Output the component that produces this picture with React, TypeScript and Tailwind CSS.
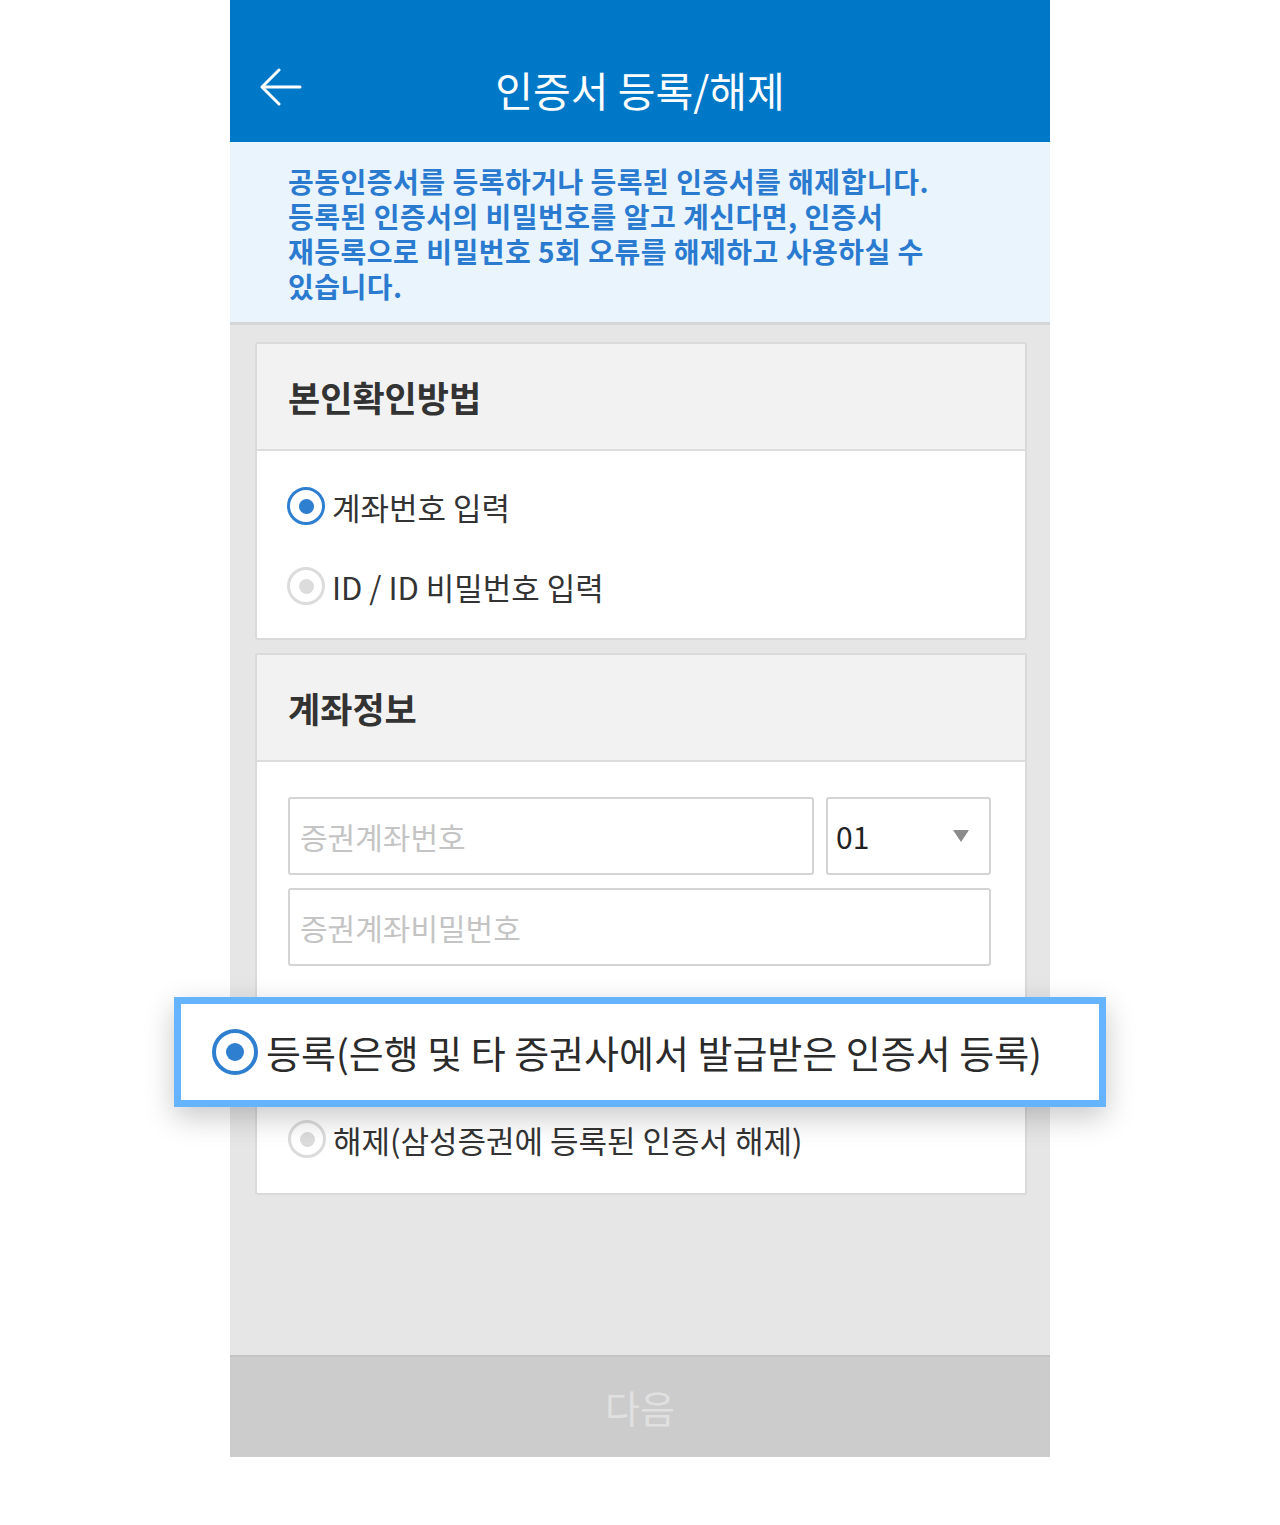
import React from "react";

const FONT = "font-['Noto_Sans_CJK_KR','Noto_Sans',sans-serif]";

function Radio({ on, big }: { on?: boolean; big?: boolean }) {
  const size = big ? "h-[46px] w-[46px] border-[4px]" : "h-[38px] w-[38px] border-[3px]";
  const dot = big ? "h-[18px] w-[18px]" : "h-[15px] w-[15px]";
  return (
    <span
      className={`flex shrink-0 items-center justify-center rounded-full bg-white ${size} ${
        on ? "border-[#2f7fd0]" : "border-[#dcdcdc]"
      }`}
    >
      <span className={`rounded-full ${dot} ${on ? "bg-[#2f7fd0]" : "bg-[#dcdcdc]"}`} />
    </span>
  );
}

function RadioRow({ label, on, hidden }: { label: string; on?: boolean; hidden?: boolean }) {
  return (
    <div className={`flex h-[80px] items-center gap-[7px] ${hidden ? "invisible" : ""}`}>
      <Radio on={on} />
      <span className="text-[31px] leading-none text-[#333]">{label}</span>
    </div>
  );
}

function CardHead({ title }: { title: string }) {
  return (
    <div className="flex h-[107px] items-center border-b-2 border-[#dcdcdc] bg-[#f2f2f2] px-[31px]">
      <h2 className="text-[35px] font-bold leading-none text-[#333]">{title}</h2>
    </div>
  );
}

export default function App() {
  return (
    <div className={`min-h-[1525px] bg-white ${FONT}`}>
      <div className="mx-auto flex h-[1457px] w-[820px] flex-col bg-[#e6e6e6]">
        {/* header */}
        <header className="relative flex h-[142px] shrink-0 items-center justify-center bg-[#0078c8] pt-[36px]">
          <button className="absolute left-[30px] top-[66px] p-0">
            <svg width="42" height="42" viewBox="0 0 42 42" fill="none" stroke="white" strokeWidth="3" strokeLinecap="round" strokeLinejoin="round">
              <path d="M40 21H3" />
              <path d="M19 4L2 21l17 17" />
            </svg>
          </button>
          <h1 className="text-[41px] font-normal leading-none text-white">인증서 등록/해제</h1>
        </header>

        {/* notice */}
        <div className="shrink-0 border-b-[3px] border-[#d6d6d6] bg-[#e9f4fd] px-[58px] pb-[18px] pt-[22px]">
          <p className="text-[28px] font-bold leading-[35px] tracking-[0.5px] text-[#2a7bd0]">
            공동인증서를 등록하거나 등록된 인증서를 해제합니다.
            <br />
            등록된 인증서의 비밀번호를 알고 계신다면, 인증서
            <br />
            재등록으로 비밀번호 5회 오류를 해제하고 사용하실 수
            <br />
            있습니다.
          </p>
        </div>

        {/* content */}
        <div className="flex flex-1 flex-col gap-[13px] pl-[25px] pr-[23px] pt-[17px]">
          <section className="overflow-hidden rounded-[3px] border-2 border-[#dadada] bg-white">
            <CardHead title="본인확인방법" />
            <div className="px-[30px] pb-[12px] pt-[15px]">
              <RadioRow label="계좌번호 입력" on />
              <RadioRow label="ID / ID 비밀번호 입력" />
            </div>
          </section>

          <section className="relative rounded-[3px] border-2 border-[#dadada] bg-white">
            <CardHead title="계좌정보" />
            <div className="pb-[14px] pl-[31px] pr-[34px] pt-[35px]">
              <div className="flex gap-[12px]">
                <div className="flex h-[78px] flex-1 items-center rounded-[3px] border-2 border-[#d4d4d4] px-[10px] text-[30px] text-[#c4c4c4]">
                  증권계좌번호
                </div>
                <div className="flex h-[78px] w-[165px] items-center justify-between rounded-[3px] border-2 border-[#d4d4d4] pl-[8px] pr-[20px]">
                  <span className="text-[30px] leading-none text-[#222]">01</span>
                  <svg width="16" height="12" viewBox="0 0 16 12">
                    <path d="M0 0h16L8 12z" fill="#8c8c8c" />
                  </svg>
                </div>
              </div>
              <div className="mt-[13px] flex h-[78px] items-center rounded-[3px] border-2 border-[#d4d4d4] px-[10px] text-[30px] text-[#c4c4c4]">
                증권계좌비밀번호
              </div>
              <div className="mt-[46px]">
                <RadioRow label="등록(은행 및 타 증권사에서 발급받은 인증서 등록)" on hidden />
              </div>
              <div className="mt-[7px]">
                <RadioRow label="해제(삼성증권에 등록된 인증서 해제)" />
              </div>
            </div>

            {/* highlighted callout */}
            <div className="absolute left-[-83px] top-[342px] flex h-[110px] w-[932px] items-center gap-[8px] border-[7px] border-[#66b3ff] bg-white pl-[31px] shadow-[0_10px_28px_rgba(0,0,0,0.22)]">
              <Radio on big />
              <span className="text-[38px] leading-none text-[#2b2b2b]">
                등록(은행 및 타 증권사에서 발급받은 인증서 등록)
              </span>
            </div>
          </section>
        </div>

        {/* bottom button */}
        <button className="flex h-[102px] shrink-0 items-center justify-center border-t-2 border-[#c4c4c4] bg-[#cccccc]">
          <span className="text-[38px] leading-none text-[#e0e0e0]">다음</span>
        </button>
      </div>
    </div>
  );
}
